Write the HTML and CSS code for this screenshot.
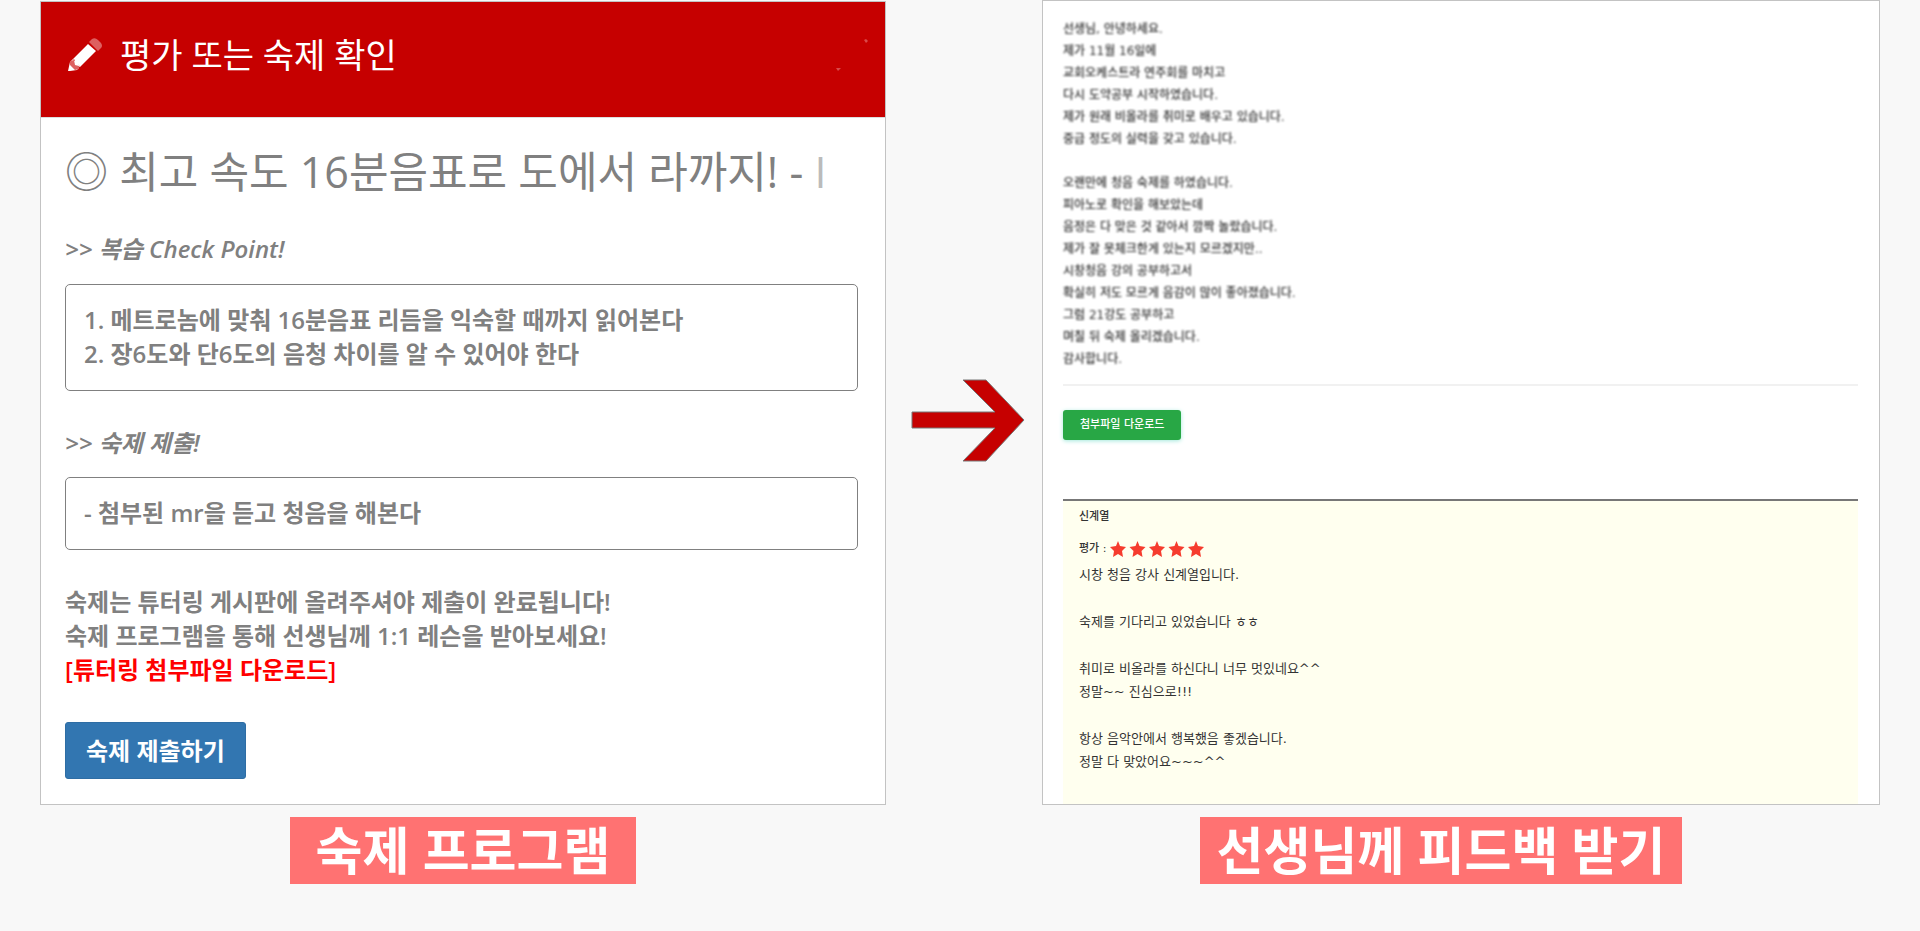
FILE: index.html
```html
<!DOCTYPE html>
<html lang="ko">
<head>
  <meta charset="UTF-8">
  <meta name="viewport" content="width=device-width, initial-scale=1">
  <title>숙제 프로그램</title>
  <link rel="stylesheet" href="styles.css">
</head>
<body>

<main class="steps">

  <figure class="step step-homework">
    <section class="panel">
      <header class="panel-header">
        <svg class="pencil" viewBox="0 0 34 34" aria-hidden="true">
          <path d="M0 33 L2 24 L5 21 L12 28 L9 32 L2 33 Z" fill="#fff"/>
          <path d="M2 23 L6 22 L7 27 L11 28 L11 31 L7 32 L2 27 Z" fill="#dd6060"/>
          <path d="M5 21 L20 6 L28 13 L12 29 L11 27 L7 26 L7 22 Z" fill="#fff"/>
          <path d="M21 4 L24 1 Q27 -1 30 2 L33 5 Q35 8 33 10 L30 13 Z" fill="#dd6060"/>
        </svg>
        <h2>평가 또는 숙제 확인</h2>
        <svg class="sparks" viewBox="0 0 34 34" aria-hidden="true">
          <path d="M29 2 L31 1 L33 3 L31 5 Z" fill="#d94a4a"/>
          <path d="M1 30 L6 30 L3 33 Z" fill="#d94a4a"/>
        </svg>
      </header>
      <div class="panel-body">
        <h1>◎ 최고 속도 16분음표로 도에서 라까지! - <span class="cut">I</span></h1>

        <h3>&gt;&gt; 복습 Check Point!</h3>
        <div class="box">
          1. 메트로놈에 맞춰 16분음표 리듬을 익숙할 때까지 읽어본다<br>
          2. 장6도와 단6도의 음청 차이를 알 수 있어야 한다
        </div>

        <h3>&gt;&gt; 숙제 제출!</h3>
        <div class="box">- 첨부된 mr을 듣고 청음을 해본다</div>

        <p class="guide">
          숙제는 튜터링 게시판에 올려주셔야 제출이 완료됩니다!<br>
          숙제 프로그램을 통해 선생님께 1:1 레슨을 받아보세요!<br>
          <a href="#">[튜터링 첨부파일 다운로드]</a>
        </p>
        <button type="button" class="submit">숙제 제출하기</button>
      </div>
    </section>
    <figcaption>숙제 프로그램</figcaption>
  </figure>

  <svg class="arrow" viewBox="0 0 114 83" aria-hidden="true">
    <path d="M1 33 H84 L52 1 H75 L113 41 L75 82 H52 L84 49 H1 Z" fill="#c60000" stroke="#777" stroke-width="1"/>
  </svg>

  <figure class="step step-feedback">
    <section class="panel">
      <div class="question">
        선생님, 안녕하세요.<br>
        제가 11월 16일에<br>
        교회오케스트라 연주회를 마치고<br>
        다시 도약공부 시작하였습니다.<br>
        제가 원래 비올라를 취미로 배우고 있습니다.<br>
        중급 정도의 실력을 갖고 있습니다.<br>
        <br>
        오랜만에 청음 숙제를 하였습니다.<br>
        피아노로 확인을 해보았는데<br>
        음정은 다 맞은 것 같아서 깜짝 놀랐습니다.<br>
        제가 잘 못체크한게 있는지 모르겠지만..<br>
        시창청음 강의 공부하고서<br>
        확실히 저도 모르게 음감이 많이 좋아졌습니다.<br>
        그럼 21강도 공부하고<br>
        며칠 뒤 숙제 올리겠습니다.<br>
        감사합니다.
      </div>
      <hr>
      <button type="button" class="download">첨부파일 다운로드</button>

      <div class="answer">
        <div class="teacher">신계열</div>
        <div class="rating">
          <span>평가 :</span>
          <svg viewBox="0 0 94 16" role="img" aria-label="5">
            <defs>
              <path id="star" d="M8 0 L10 5 L16 6 L12 10 L13 16 L8 13 L3 16 L4 10 L0 6 L6 5 Z"/>
            </defs>
            <g fill="#f63c2e">
              <use href="#star" x="0"/>
              <use href="#star" x="19.5"/>
              <use href="#star" x="39"/>
              <use href="#star" x="58.5"/>
              <use href="#star" x="78"/>
            </g>
          </svg>
        </div>
        <p>시창 청음 강사 신계열입니다.</p>
        <p>숙제를 기다리고 있었습니다 ㅎㅎ</p>
        <p>취미로 비올라를 하신다니 너무 멋있네요^^<br>정말~~ 진심으로!!!</p>
        <p>항상 음악안에서 행복했음 좋겠습니다.<br>정말 다 맞았어요~~~^^</p>
      </div>
    </section>
    <figcaption>선생님께 피드백 받기</figcaption>
  </figure>

</main>

</body>
</html>
```

FILE: styles.css
```css
* {
  box-sizing: border-box;
}

body {
  margin: 0;
  background: #f8f8f8;
  color: #808080;
  font-family: "Open Sans", "Noto Sans CJK KR", sans-serif;
}

h1, h2, h3, p, figure {
  margin: 0;
}

.steps {
  display: flex;
  padding: 0 40px;
}

.step {
  display: flex;
  flex-direction: column;
  align-items: center;
  min-width: 0;
}

.step-homework {
  flex: 846 1 0;
  padding-top: 1px;
}

.step-feedback {
  flex: 838 1 0;
}

.panel {
  width: 100%;
  border: 1px solid #c3c3c3;
  background: #fff;
}

figcaption {
  margin-top: 12px;
  padding: 0 26px;
  background: #ff7272;
  color: #fff;
  font-size: 51px;
  font-weight: 600;
  line-height: 67px;
}

.step-feedback figcaption {
  margin-right: 40px;
  padding: 0 17px;
}

/* homework panel */
.panel-header {
  display: flex;
  align-items: center;
  gap: 18px;
  height: 116px;
  padding: 0 16px 10px 27px;
  background: #c60000;
  border-bottom: 1px solid #ddd;
  color: #fff;
}

.panel-header h2 {
  flex: 1;
  font-size: 34px;
  font-weight: 400;
  line-height: 48px;
}

.pencil, .sparks {
  width: 34px;
  height: 34px;
}

.panel-body {
  padding: 24px 27px 25px 24px;
}

h1 {
  font-size: 43px;
  font-weight: 400;
  line-height: 60px;
  white-space: nowrap;
}

.cut {
  color: #bbb;
}

h3 {
  margin: 30px 0 18px;
  font-size: 24px;
  font-style: italic;
  font-weight: 600;
  line-height: 34px;
}

.box {
  padding: 18px 18px 19px;
  border: 1px solid #808080;
  border-radius: 5px;
  font-size: 24px;
  font-weight: 600;
  line-height: 34px;
}

.box + h3 {
  margin: 35px 0 17px;
}

.guide {
  margin: 35px 0;
  font-size: 24px;
  font-weight: 600;
  line-height: 34px;
}

.guide a {
  color: #f00;
  text-decoration: none;
}

.submit {
  display: block;
  padding: 10px 20px;
  border: 1px solid #2e6da4;
  border-radius: 3px;
  background: #3276b1;
  color: #fff;
  font-family: inherit;
  font-size: 24px;
  font-weight: 600;
  line-height: 35px;
}

.arrow {
  flex: none;
  width: 114px;
  height: 83px;
  margin: 379px 17px 0 25px;
}

/* feedback panel */
.step-feedback .panel {
  padding: 17px 21px 0 20px;
  color: #333;
  font-family: "DejaVu Sans", "Noto Sans CJK KR", sans-serif;
}

.question {
  font-size: 12px;
  font-weight: 500;
  line-height: 22px;
  filter: blur(1px);
}

hr {
  height: 2px;
  margin: 14px 0 24px;
  border: 0;
  background: #f1f1f1;
}

.download {
  display: block;
  padding: 0 17px;
  border: 0;
  border-radius: 3px;
  background: #28a745;
  box-shadow: 0 1px 4px #a4e8dc;
  color: #fff;
  font-family: inherit;
  font-size: 11px;
  font-weight: 500;
  line-height: 30px;
}

.answer {
  margin-top: 59px;
  padding: 6px 16px 31px;
  border-top: 2px solid #777;
  background: #ffffef;
  font-size: 13px;
  line-height: 23px;
}

.teacher, .rating {
  font-size: 11px;
  font-weight: 500;
  line-height: 20px;
}

.rating {
  display: flex;
  align-items: center;
  gap: 4px;
  margin: 12px 0 4px;
}

.rating svg {
  width: 94px;
  height: 16px;
}

.answer p + p {
  margin-top: 24px;
}
```
